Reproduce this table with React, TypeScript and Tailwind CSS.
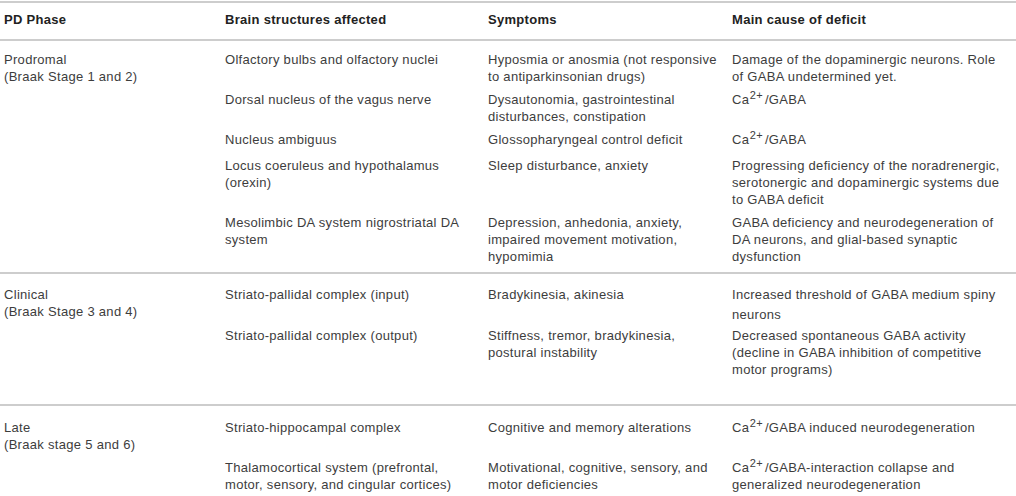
import React from "react";

const Ca = ({ rest }: { rest: string }) => (
  <span>
    Ca<sup className="text-[11px] top-[-0.45em] ml-[0.5px] mr-[2px]">2+</sup>
    {rest}
  </span>
);

type Row = {
  pt: string;
  pb: string;
  c2: React.ReactNode;
  c3: React.ReactNode;
  c4: React.ReactNode;
};

type Group = {
  phase: React.ReactNode;
  phasePt: string;
  rows: Row[];
  border: boolean;
};

const groups: Group[] = [
  {
    phase: (
      <>
        Prodromal
        <br />
        (Braak Stage 1 and 2)
      </>
    ),
    phasePt: "pt-[10px]",
    border: true,
    rows: [
      {
        pt: "pt-[10px]",
        pb: "pb-[3px]",
        c2: "Olfactory bulbs and olfactory nuclei",
        c3: (
          <>
            Hyposmia or anosmia (not responsive
            <br />
            to antiparkinsonian drugs)
          </>
        ),
        c4: (
          <>
            Damage of the dopaminergic neurons. Role
            <br />
            of GABA undetermined yet.
          </>
        ),
      },
      {
        pt: "pt-[3px]",
        pb: "pb-[3px]",
        c2: "Dorsal nucleus of the vagus nerve",
        c3: (
          <>
            Dysautonomia, gastrointestinal
            <br />
            disturbances, constipation
          </>
        ),
        c4: <Ca rest="/GABA" />,
      },
      {
        pt: "pt-[3px]",
        pb: "pb-[6px]",
        c2: "Nucleus ambiguus",
        c3: "Glossopharyngeal control deficit",
        c4: <Ca rest="/GABA" />,
      },
      {
        pt: "pt-[3px]",
        pb: "pb-[3px]",
        c2: (
          <>
            Locus coeruleus and hypothalamus
            <br />
            (orexin)
          </>
        ),
        c3: "Sleep disturbance, anxiety",
        c4: (
          <>
            Progressing deficiency of the noradrenergic,
            <br />
            serotonergic and dopaminergic systems due
            <br />
            to GABA deficit
          </>
        ),
      },
      {
        pt: "pt-[3px]",
        pb: "pb-[7px]",
        c2: (
          <>
            Mesolimbic DA system nigrostriatal DA
            <br />
            system
          </>
        ),
        c3: (
          <>
            Depression, anhedonia, anxiety,
            <br />
            impaired movement motivation,
            <br />
            hypomimia
          </>
        ),
        c4: (
          <>
            GABA deficiency and neurodegeneration of
            <br />
            DA neurons, and glial-based synaptic
            <br />
            dysfunction
          </>
        ),
      },
    ],
  },
  {
    phase: (
      <>
        Clinical
        <br />
        (Braak Stage 3 and 4)
      </>
    ),
    phasePt: "pt-[12px]",
    border: true,
    rows: [
      {
        pt: "pt-[12px]",
        pb: "pb-[1px]",
        c2: "Striato-pallidal complex (input)",
        c3: "Bradykinesia, akinesia",
        c4: (
          <>
            Increased threshold of GABA medium spiny
            <span className="block mt-[3px]">neurons</span>
          </>
        ),
      },
      {
        pt: "pt-[3px]",
        pb: "pb-[26px]",
        c2: "Striato-pallidal complex (output)",
        c3: (
          <>
            Stiffness, tremor, bradykinesia,
            <br />
            postural instability
          </>
        ),
        c4: (
          <>
            Decreased spontaneous GABA activity
            <br />
            (decline in GABA inhibition of competitive
            <br />
            motor programs)
          </>
        ),
      },
    ],
  },
  {
    phase: (
      <>
        Late
        <br />
        (Braak stage 5 and 6)
      </>
    ),
    phasePt: "pt-[13px]",
    border: false,
    rows: [
      {
        pt: "pt-[13px]",
        pb: "pb-[23px]",
        c2: "Striato-hippocampal complex",
        c3: "Cognitive and memory alterations",
        c4: <Ca rest="/GABA induced neurodegeneration" />,
      },
      {
        pt: "pt-0",
        pb: "pb-[5px]",
        c2: (
          <>
            Thalamocortical system (prefrontal,
            <br />
            motor, sensory, and cingular cortices)
          </>
        ),
        c3: (
          <>
            Motivational, cognitive, sensory, and
            <br />
            motor deficiencies
          </>
        ),
        c4: (
          <>
            <Ca rest="/GABA-interaction collapse and" />
            <br />
            generalized neurodegeneration
          </>
        ),
      },
    ],
  },
];

export default function App() {
  return (
    <div
      className="w-[1016px] h-[496px] overflow-hidden bg-white text-[#3d3d3d] text-[13px] leading-[17px] tracking-[0.3px] whitespace-nowrap"
      style={{ fontFamily: '"Liberation Sans", Arial, Helvetica, sans-serif' }}
    >
      <div className="mt-[1px] border-t-2 border-[#cdcdcd]">
        <div className="flex font-bold text-[#222] pt-[8px] pb-[11px] border-b-2 border-[#cdcdcd]">
          <div className="w-[221px] pl-[4px]">PD Phase</div>
          <div className="w-[263px] pl-[4px]">Brain structures affected</div>
          <div className="w-[244px] pl-[4px]">Symptoms</div>
          <div className="w-[288px] pl-[4px]">Main cause of deficit</div>
        </div>
        {groups.map((g, gi) => (
          <div
            key={gi}
            className={`flex ${g.border ? "border-b-2 border-[#cdcdcd]" : ""}`}
          >
            <div className={`w-[221px] shrink-0 pl-[4px] ${g.phasePt}`}>{g.phase}</div>
            <div className="flex flex-col">
              {g.rows.map((r, ri) => (
                <div key={ri} className={`flex ${r.pt} ${r.pb}`}>
                  <div className="w-[263px] shrink-0 pl-[4px]">{r.c2}</div>
                  <div className="w-[244px] shrink-0 pl-[4px]">{r.c3}</div>
                  <div className="w-[288px] shrink-0 pl-[4px]">{r.c4}</div>
                </div>
              ))}
            </div>
          </div>
        ))}
      </div>
    </div>
  );
}
